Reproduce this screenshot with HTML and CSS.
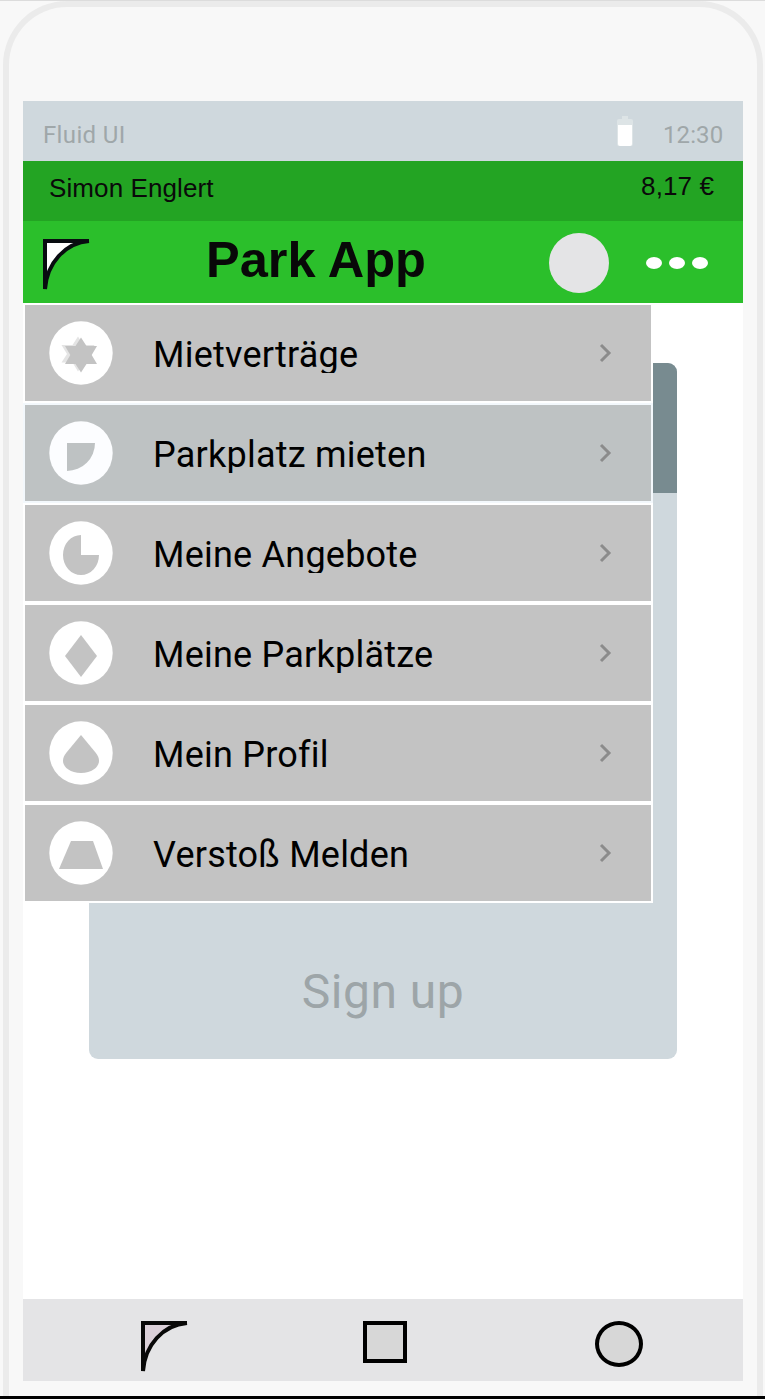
FILE: index.html
```html
<!DOCTYPE html>
<html lang="de">
<head>
<meta charset="utf-8">
<title>Park App</title>
<link rel="stylesheet" href="styles.css">
</head>
<body>
<div class="page">
<div class="phone">
<div class="screen">
  <div class="status">
    <span class="carrier">Fluid UI</span>
    <svg class="battery" width="16" height="30" viewBox="0 0 16 30"><path fill="#dde4e6" d="M5 0h6v3h3q2 0 2 2v23q0 2-2 2H2q-2 0-2-2V5q0-2 2-2h3z"/><path fill="#fff" d="M1 9h14v19q0 2-2 2H3q-2 0-2-2z"/></svg>
    <span class="clock">12:30</span>
  </div>
  <div class="account"><span class="user">Simon Englert</span><span class="balance">8,17 €</span></div>
  <header class="header">
    <svg class="back" width="48" height="52" viewBox="0 0 48 52"><path d="M2 2H46C22 4 4 24 2 50Z" fill="#fff"/><path d="M46 2H2V50C4 24 22 4 46 2" fill="none" stroke="#080c10" stroke-width="4"/></svg>
    <h1 class="title">Park App</h1>
    <span class="avatar"></span>
    <span class="more"><i class="dot"></i><i class="dot"></i><i class="dot"></i></span>
  </header>
  <main class="content">
    <div class="card"><div class="card-head"></div><div class="card-body"><span class="signup">Sign up</span></div></div>
    <nav class="menu">
      <a class="item">
        <svg class="icon" width="64" height="64" viewBox="0 0 64 64"><circle cx="32" cy="32" r="31.700" fill="#fff"/><path transform="translate(-3 -1.500)" fill="#e4e4e4" d="M32 17l5.500 8.500H48.500L43 34.500l5.500 8.500H37.500L32 52l-5.500-9H15.500L21 34.500 15.500 25.500H26.500z"/><path fill="#c3c3c3" d="M32 16.500l5.500 8.500H48L42.700 34l5.300 9H37.500L32 51.500 26.500 43H16L21.300 34 16 25H26.500z"/></svg>
        <span class="label">Mietverträge</span><svg class="chev" width="13" height="20" viewBox="0 0 13 20"><path d="M2 2l8 8-8 8" fill="none" stroke="#8b8b8b" stroke-width="3"/></svg></a>
      <a class="item selected">
        <svg class="icon" width="64" height="64" viewBox="0 0 64 64"><circle cx="32" cy="32" r="31.700" fill="#fcfdff"/><path fill="#bec2c3" d="M18 22H46A28 28 0 0 1 18 50z"/></svg>
        <span class="label">Parkplatz mieten</span><svg class="chev" width="13" height="20" viewBox="0 0 13 20"><path d="M2 2l8 8-8 8" fill="none" stroke="#8b8b8b" stroke-width="3"/></svg></a>
      <a class="item">
        <svg class="icon" width="64" height="64" viewBox="0 0 64 64"><circle cx="32" cy="32" r="31.700" fill="#fff"/><path fill="#c3c3c3" d="M32 14A18 20 0 1 0 50 34H32z"/></svg>
        <span class="label">Meine Angebote</span><svg class="chev" width="13" height="20" viewBox="0 0 13 20"><path d="M2 2l8 8-8 8" fill="none" stroke="#8b8b8b" stroke-width="3"/></svg></a>
      <a class="item">
        <svg class="icon" width="64" height="64" viewBox="0 0 64 64"><circle cx="32" cy="32" r="31.700" fill="#fff"/><path fill="#c3c3c3" d="M32 14L48 35 32 56 16 35z"/></svg>
        <span class="label">Meine Parkplätze</span><svg class="chev" width="13" height="20" viewBox="0 0 13 20"><path d="M2 2l8 8-8 8" fill="none" stroke="#8b8b8b" stroke-width="3"/></svg></a>
      <a class="item">
        <svg class="icon" width="64" height="64" viewBox="0 0 64 64"><circle cx="32" cy="32" r="31.700" fill="#fff"/><path fill="#c3c3c3" d="M32 14L46.500 31.500C49 35 50 36.500 50 40C50 46 43 52 32 52S14 46 14 40C14 36.500 15 35 17.500 31.500z"/></svg>
        <span class="label">Mein Profil</span><svg class="chev" width="13" height="20" viewBox="0 0 13 20"><path d="M2 2l8 8-8 8" fill="none" stroke="#8b8b8b" stroke-width="3"/></svg></a>
      <a class="item">
        <svg class="icon" width="64" height="64" viewBox="0 0 64 64"><circle cx="32" cy="32" r="31.700" fill="#fff"/><path fill="#c3c3c3" d="M22 20H44L54 48H10z"/></svg>
        <span class="label">Verstoß Melden</span><svg class="chev" width="13" height="20" viewBox="0 0 13 20"><path d="M2 2l8 8-8 8" fill="none" stroke="#8b8b8b" stroke-width="3"/></svg></a>
    </nav>
  </main>
  <footer class="bottom">
    <svg class="nav-back" width="48" height="52" viewBox="0 0 48 52"><path d="M2 2H46C22 4 4 24 2 50Z" fill="#dbd0d9"/><path d="M46 2H2V50C4 24 22 4 46 2" fill="none" stroke="#080808" stroke-width="4"/></svg>
    <span class="nav-square"></span>
    <span class="nav-circle"></span>
  </footer>
</div>
</div>
<div class="base"></div>
</div>
</body>
</html>
```
FILE: styles.css
```css
* { box-sizing: border-box; }
body { margin: 0; background: #f8f8f8; font-family: Roboto, "Liberation Sans", sans-serif; }
.page { width: 765px; height: 1399px; overflow: hidden; border-top: 1px solid #dcdcdc; display: flex; flex-direction: column; }
.phone { width: 760px; height: 1395px; flex: none; margin-left: 3px; border: 6px solid #ebebeb; border-bottom: 0; border-radius: 64px 64px 0 0; padding: 94px 14px 0; }
.base { height: 3px; background: #000; flex: none; }
.screen { width: 720px; height: 1280px; background: #fff; }
.status { height: 60px; background: #cfd8dd; display: flex; align-items: flex-start; padding: 0 20px; color: #9fa7a9; font-size: 24px; line-height: 28px; }
.carrier { padding-top: 20px; letter-spacing: .35px; flex: 1; }
.battery { margin: 15px 30px 0 0; }
.clock { padding-top: 20px; width: 60px; white-space: nowrap; letter-spacing: .1px; }
.account { height: 60px; background: #23a423; display: flex; justify-content: space-between; padding: 0 29px 0 26px; font: 26px/30px "Liberation Sans", Arial, sans-serif; letter-spacing: .1px; color: #0a0a0a; }
.user { padding-top: 12px; }
.balance { padding-top: 10px; }
.header { height: 82px; background: #2bbf2b; display: flex; align-items: flex-start; padding-left: 20px; }
.back { margin-top: 18px; }
.title { margin: 9px 0 0 115px; width: 343px; font: bold 50.5px/60px "Liberation Sans", Arial, sans-serif; color: #080808; }
.avatar { width: 60px; height: 60px; margin-top: 12px; border-radius: 50%; background: #e4e4e6; }
.more { display: flex; gap: 7px; margin: 36px 0 0 37px; }
.dot { width: 16px; height: 12px; border-radius: 50%; background: #fff; }
.content { height: 996px; display: grid; align-items: start; justify-items: start; }
.card, .menu { grid-area: 1 / 1; }
.card { width: 588px; height: 696px; margin: 60px 0 0 66px; border-radius: 9px; overflow: hidden; background: #cfd8dd; display: flex; flex-direction: column; }
.card-head { height: 130px; background: #788b90; }
.card-body { flex: 1; display: flex; justify-content: center; align-items: flex-end; padding-bottom: 39px; }
.signup { font-size: 48px; line-height: 56px; letter-spacing: .5px; color: #9da5a8; }
.menu { width: 630px; z-index: 1; }
.item { height: 100px; border: 2px solid #fff; background: #c3c3c3; display: flex; align-items: flex-start; padding-left: 24px; color: #000; }
.selected { background: #bec2c3; border-color: #f3f8fc; }
.icon { margin-top: 16px; }
.label { width: 446px; height: 39px; margin: 29px 0 0 40px; font-size: 36px; line-height: 42px; overflow: hidden; white-space: nowrap; letter-spacing: .23px; }
.chev { margin-top: 38px; }
.bottom { height: 82px; background: #e4e4e6; display: flex; align-items: flex-start; padding: 22px 0 0 118px; }
.nav-square { width: 44px; height: 42px; margin-left: 174px; border: 4px solid #000; background: #d7d7d7; }
.nav-circle { width: 48px; height: 46px; margin-left: 188px; border: 4px solid #000; border-radius: 50%; background: #d7d7d7; }
```
